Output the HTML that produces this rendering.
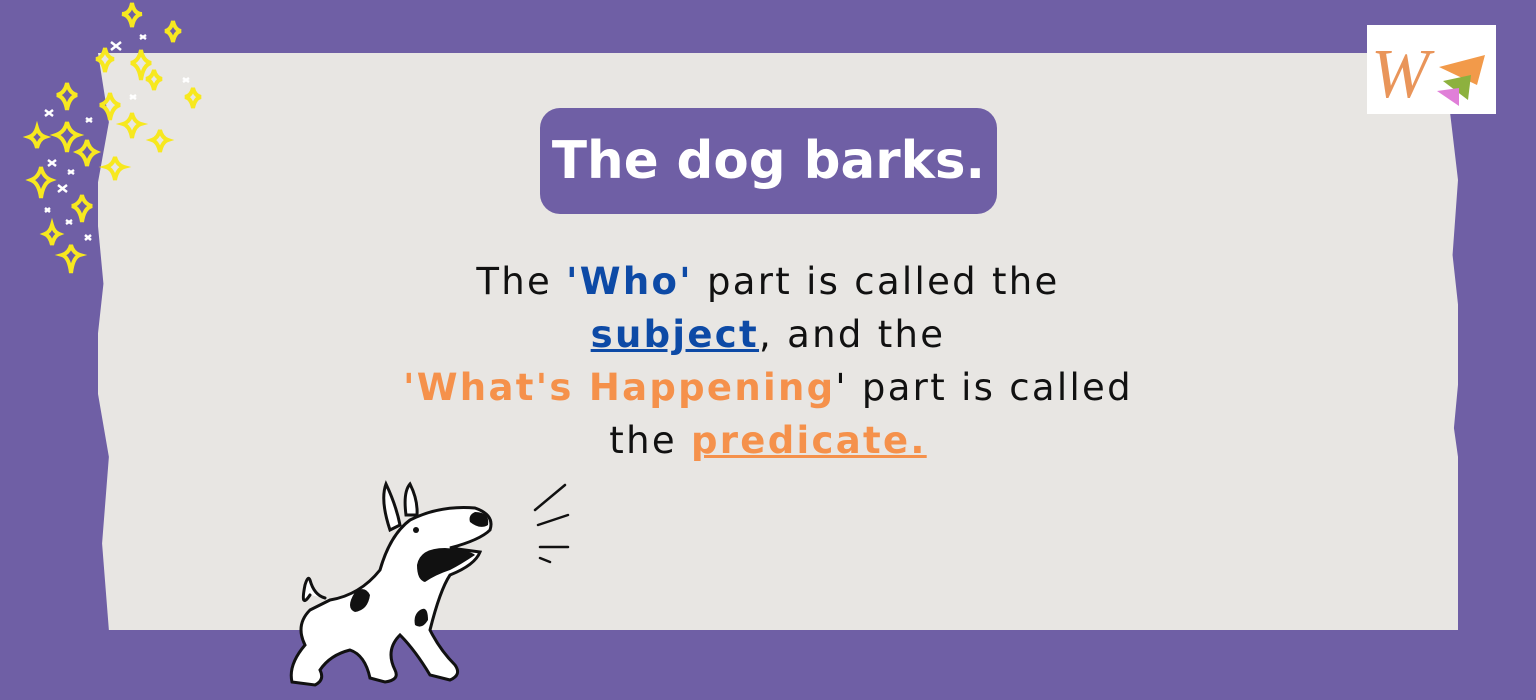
<!DOCTYPE html>
<html><head><meta charset="utf-8"><style>
html,body{margin:0;padding:0}
body{width:1536px;height:700px;background:#6f5fa5;position:relative;overflow:hidden;font-family:"DejaVu Sans","Liberation Sans",sans-serif}
.paper{position:absolute;left:98px;top:53px;width:1360px;height:577px;background:#e8e6e3;
clip-path:polygon(0 0,100% 0,99.4% 10%,100% 22%,99.6% 35%,100.3% 50%,99.7% 65%,100.6% 80%,100% 100%,0.8% 100%,0.3% 85%,0.8% 70%,-0.3% 55%,0.4% 40%,-0.2% 25%,0.8% 12%)}
.title{position:absolute;left:540px;top:108px;width:457px;height:106px;background:#6f5fa5;border-radius:20px;color:#fff;font-weight:bold;font-size:51.5px;line-height:106px;text-align:center}
.body{position:absolute;left:234px;top:255px;width:1068px;text-align:center;font-size:37px;line-height:53px;color:#111;letter-spacing:2.3px}
.b{color:#0d4aa6;font-weight:bold}.o{color:#f5914b;font-weight:bold}
.logo{position:absolute;left:1367px;top:25px;width:129px;height:89px;background:#fff}
</style></head><body>
<div class="paper"></div>
<svg style="position:absolute;left:0;top:0" width="240" height="300" viewBox="0 0 240 300">
<g fill="none" stroke="#f7e81f" stroke-width="4">
<path d="M132 3 Q134 14 142 14 Q134 15 132 27 Q130 15 122 14 Q130 14 132 3Z"/>
<path d="M173 21 Q175 30 181 31 Q175 32 173 42 Q171 32 165 31 Q171 30 173 21Z"/>
<path d="M105 48 Q107 58 114 59 Q107 60 105 72 Q103 60 96 59 Q103 58 105 48Z"/>
<path d="M141 50 Q143 61 151 63 Q143 65 141 80 Q139 65 131 63 Q139 61 141 50Z"/>
<path d="M154 70 Q156 78 162 79 Q156 80 154 90 Q152 80 146 79 Q152 78 154 70Z"/>
<path d="M193 88 Q195 96 201 97 Q195 98 193 108 Q191 98 185 97 Q191 96 193 88Z"/>
<path d="M67 83 Q69 93 77 95 Q69 97 67 110 Q65 97 57 95 Q65 93 67 83Z"/>
<path d="M110 93 Q112 103 120 105 Q112 107 110 120 Q108 107 100 105 Q108 103 110 93Z"/>
<path d="M37 128 Q39 135 45 137 Q39 139 37 148 Q35 139 29 137 Q35 135 37 128Z"/>
<path d="M67 122 Q69 132 78 135 Q69 138 67 152 Q65 138 56 135 Q65 132 67 122Z"/>
<path d="M87 140 Q89 149 96 152 Q89 155 87 166 Q85 155 78 152 Q85 149 87 140Z"/>
<path d="M132 113 Q134 122 141 124 Q134 126 132 138 Q130 126 123 124 Q130 122 132 113Z"/>
<path d="M160 130 Q162 138 168 140 Q162 142 160 152 Q158 142 152 140 Q158 138 160 130Z"/>
<path d="M115 157 Q117 165 124 167 Q117 169 115 180 Q113 169 106 167 Q113 165 115 157Z"/>
<path d="M41 167 Q43 177 51 180 Q43 183 41 198 Q39 183 31 180 Q39 177 41 167Z"/>
<path d="M82 195 Q84 204 92 206 Q84 208 82 222 Q80 208 72 206 Q80 204 82 195Z"/>
<path d="M52 225 Q54 232 59 234 Q54 236 52 245 Q50 236 45 234 Q50 232 52 225Z"/>
<path d="M71 245 Q73 253 80 255 Q73 257 71 273 Q69 257 62 255 Q69 253 71 245Z"/>
</g>
<g stroke="#fff" stroke-width="2.5">
<path d="M111 42l10 8M121 42l-10 8M140 35l6 4M146 35l-6 4M45 110l8 6M53 110l-8 6M86 118l6 4M92 118l-6 4M48 160l8 6M56 160l-8 6M58 185l9 7M67 185l-9 7M68 170l6 4M74 170l-6 4M45 208l5 4M50 208l-5 4M66 220l6 4M72 220l-6 4M85 235l6 5M91 235l-6 5M130 95l6 4M136 95l-6 4M183 78l6 4M189 78l-6 4"/>
</g></svg>
<div class="logo"><svg width="129" height="89" viewBox="0 0 129 89">
<text x="4" y="72" font-family="Liberation Serif,serif" font-style="italic" font-size="70" fill="#e9955a">W</text>
<path d="M72 42l46-12-8 30z" fill="#f29a4a"/><path d="M76 56l28-6-3 25z" fill="#8db13e"/><path d="M70 66l22-3 0 18z" fill="#e07fd8"/></svg></div>
<div class="title">The dog barks.</div>
<div class="body">The <span class="b">'Who'</span> part is called the<br><span class="b" style="text-decoration:underline">subject</span>, and the<br><span class="o">'What's Happening</span>' part is called<br>the <span class="o" style="text-decoration:underline">predicate.</span></div>
<svg style="position:absolute;left:270px;top:470px" width="320" height="230" viewBox="0 0 320 230">
<g stroke="#111" stroke-width="3" stroke-linecap="round" fill="#fff">
<path d="M120 60 Q110 30 116 14 Q126 35 130 55Z"/>
<path d="M136 45 Q133 22 140 14 Q148 30 147 45Z"/>
<path d="M40 125 Q30 140 35 115 Q38 105 40 110 Q44 125 55 128"/>
<path d="M60 130 Q90 125 110 100 Q120 65 140 50 Q170 35 205 38 Q225 45 220 60 Q210 70 180 78 L210 82 Q205 95 180 105 Q170 120 160 160 Q170 180 185 195 Q192 205 180 210 L160 205 Q145 180 130 165 Q115 180 125 200 Q130 210 115 212 L100 208 Q95 185 80 180 Q60 185 50 200 Q55 210 45 215 L22 212 Q18 195 35 175 Q25 155 40 140 Z"/>
</g>
<path d="M147 95 Q150 78 175 78 Q200 80 205 85 Q190 95 180 100 Q165 105 155 112 Q147 110 147 95Z" fill="#111"/>
<path d="M205 42 Q220 42 218 55 Q210 60 200 52 Q198 45 205 42Z" fill="#111"/>
<path d="M85 122 Q95 115 100 125 Q98 140 85 142 Q75 138 85 122Z" fill="#111"/>
<path d="M150 140 Q158 135 158 150 Q152 160 145 155 Q143 145 150 140Z" fill="#111"/>
<circle cx="146" cy="60" r="3" fill="#111"/>
<g stroke="#111" stroke-width="2.5" stroke-linecap="round"><path d="M295 15l-30 25M298 45l-30 10M298 77h-28M280 92l-10-4"/></g>
</svg>
</body></html>
